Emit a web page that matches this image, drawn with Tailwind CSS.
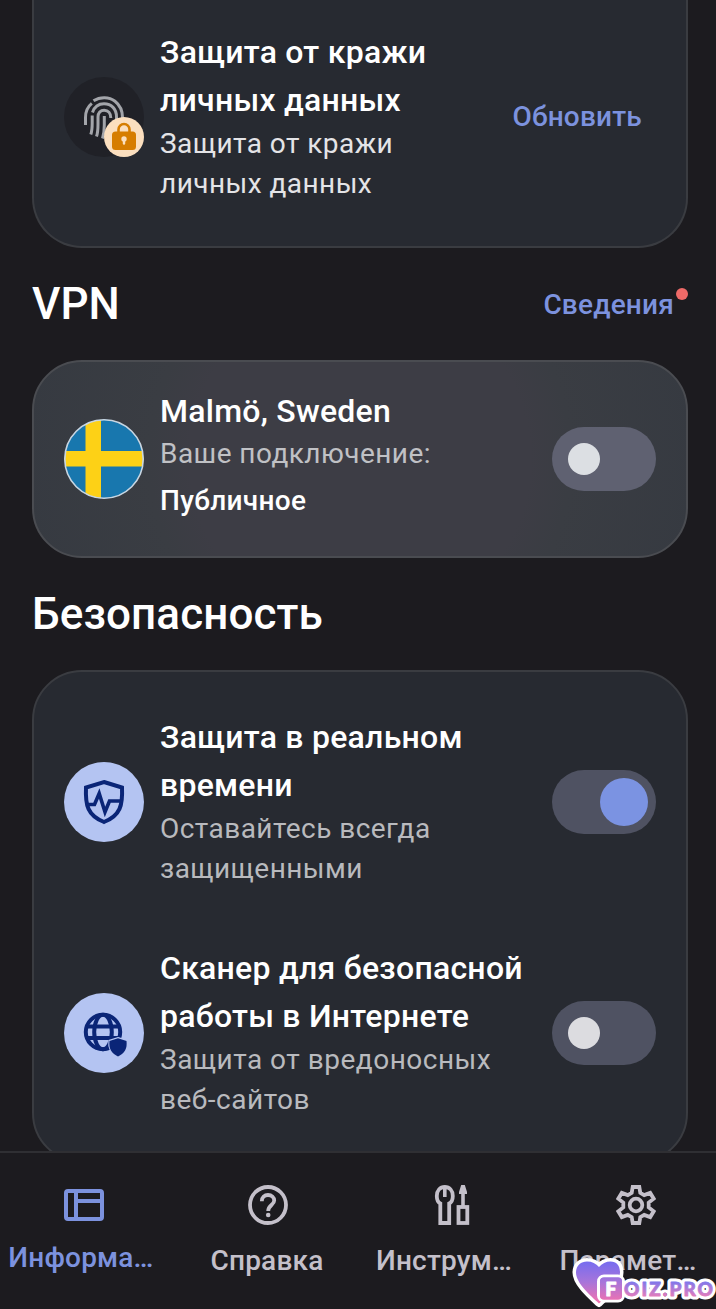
<!DOCTYPE html>
<html lang="ru">

<head>
    <meta charset="UTF-8">
    <meta name="viewport" content="width=device-width, initial-scale=1.0">
    <title>Безопасность</title>
    <script src="https://cdn.jsdelivr.net/npm/@tailwindcss/browser@4"></script>
</head>

<body class="bg-[#1c1b1f] text-white font-[Roboto,sans-serif] antialiased">
    <div class="relative flex flex-col h-[1309px] overflow-hidden">
        <main class="flex-1 min-h-0 overflow-hidden pl-8 pr-7">
            <!-- Identity protection -->
            <section class="h-[248px] px-[30px] pt-7 border-2 border-t-0 border-[#3a3c41] bg-[#272a31] rounded-b-[50px]">
                <div class="flex items-center gap-4">
                    <div class="relative mt-0.5 size-20 shrink-0 rounded-full bg-[#202127] flex items-center justify-center">
                        <svg class="size-11" viewBox="0 0 44 44" fill="none" stroke="#a3a5aa" stroke-width="3" stroke-linecap="butt">
                            <path d="M3.500 30V22.500C3.500 16.500 6 11.500 9.800 8.400" />
                            <path d="M11.500 5.800C18 1.600 27 1.600 33 6.200C38.500 10.500 40.500 16 40.500 22.500V27" />
                            <path d="M10.500 17.500C12.500 11.500 17 8.800 22 8.800C29.500 8.800 34.500 14 34.500 22V26" />
                            <path d="M8.800 39.500C10 36 10.200 33 10.200 28V20.500" />
                            <path d="M14.500 41.500C15.800 38 16 34 16 29V22C16 18 18.500 15.200 22.200 15.200C26 15.200 28.800 18 28.800 23" />
                            <path d="M20.500 43.500C22 39 22.300 35 22.300 30V21" />
                        </svg>
                        <div class="absolute right-0 bottom-0 size-10 rounded-full bg-[#fbdfbf] flex items-center justify-center">
                            <svg class="size-10" viewBox="0 0 40 40">
                                <path d="M14.500 16V12.500a5.500 5.500 0 0 1 11 0V16" fill="none" stroke="#d67d00" stroke-width="2.600" />
                                <rect x="8" y="14.500" width="24" height="18.500" rx="3.500" fill="#d67d00" />
                                <circle cx="20" cy="22" r="2.700" fill="#fbdfbf" />
                                <rect x="18.800" y="22" width="2.400" height="5.800" rx="1.200" fill="#fbdfbf" />
                            </svg>
                        </div>
                    </div>
                    <div class="flex-1">
                        <h2 class="text-[32px] leading-[48px] font-medium tracking-[0.25px]">Защита от кражи<br>личных данных</h2>
                        <p class="text-[28px] leading-10 tracking-[0.45px] text-[#e4e4e7]">Защита от кражи<br>личных данных</p>
                    </div>
                    <button class="mt-0.5 mr-[14px] text-[28px] font-medium tracking-[0.2px] text-[#7c92de]">Обновить</button>
                </div>
            </section>

            <!-- VPN -->
            <div class="h-28 flex items-center justify-between">
                <h1 class="text-[44px] leading-[56px] font-medium">VPN</h1>
                <a class="relative mt-0.5 pr-[14px] text-[28px] font-medium tracking-[0.2px] text-[#7c92de]">Сведения<span
                        class="absolute right-0 top-1 size-3 rounded-full bg-[#ee6a68]"></span></a>
            </div>
            <section
                class="h-[198px] px-[30px] flex items-center gap-4 border-2 border-[#4a4c51] rounded-[50px] bg-[radial-gradient(circle_at_50%_50%,#3d3d45_0%,#3d3d45_50%,#3a3d43_62%,#363a41_100%)]">
                <svg class="size-20 shrink-0" viewBox="0 0 80 80">
                    <clipPath id="flag">
                        <circle cx="40" cy="40" r="39.500" />
                    </clipPath>
                    <g clip-path="url(#flag)">
                        <rect width="80" height="80" fill="#1877ae" />
                        <path d="M21.500 0h15.500v80h-15.500zM0 32h80v15.500H0z" fill="#fdd116" />
                    </g>
                    <circle cx="40" cy="40" r="39.200" fill="none" stroke="#c9d6e2" stroke-width="1.600" />
                </svg>
                <div class="flex-1">
                    <h2 class="text-[32px] leading-[48px] font-medium tracking-[0.25px]">Malmö, Sweden</h2>
                    <p class="text-[28px] leading-[38px] tracking-[0.45px] text-[#c0c1c5]">Ваше подключение:</p>
                    <p class="pb-0.5 text-[28px] leading-[56px] font-medium tracking-[0.3px]">Публичное</p>
                </div>
                <div class="w-[104px] h-16 px-4 rounded-full bg-[#5f6171] flex items-center">
                    <span class="size-8 rounded-full bg-[#dcdfe3]"></span>
                </div>
            </section>

            <!-- Security -->
            <div class="h-28 flex items-center">
                <h1 class="text-[44px] leading-[56px] font-medium tracking-[0.1px]">Безопасность</h1>
            </div>
            <section class="px-[30px] py-[41px] flex flex-col gap-[55px] border-2 border-[#3a3c41] bg-[#272a31] rounded-[50px]">
                <div class="flex items-center gap-4">
                    <div class="mt-0.5 size-20 shrink-0 rounded-full bg-[#b4c4f2] flex items-center justify-center">
                        <svg class="size-20" viewBox="0 0 80 80" fill="none" stroke="#0a2577" stroke-width="4">
                            <path d="M40 20L58 25.500C58.800 43 56.500 53.500 40 60C23.500 53.500 21.200 43 22 25.500Z" />
                            <path d="M23 42.500H30.500L35.200 31.500L41 50L45.500 39H58" stroke-width="3.600" />
                        </svg>
                    </div>
                    <div class="flex-1">
                        <h2 class="text-[32px] leading-[48px] font-medium tracking-[0.25px]">Защита в реальном<br>времени</h2>
                        <p class="text-[28px] leading-10 tracking-[0.45px] text-[#b9babe]">Оставайтесь всегда<br>защищенными</p>
                    </div>
                    <div class="mt-0.5 w-[104px] h-16 px-2 rounded-full bg-[#4f5262] flex items-center justify-end">
                        <span class="size-12 rounded-full bg-[#7b93e2]"></span>
                    </div>
                </div>
                <div class="flex items-center gap-4">
                    <div class="mt-0.5 size-20 shrink-0 rounded-full bg-[#b4c4f2] flex items-center justify-center">
                        <svg class="size-20" viewBox="0 0 80 80" fill="none" stroke="#0a2577" stroke-width="4">
                            <circle cx="39" cy="39" r="17.200" />
                            <ellipse cx="39" cy="39" rx="8.800" ry="17.200" />
                            <path d="M23.500 33.500H54.500M23.500 45H54.500" />
                            <path d="M54 45.200L62.500 48C63.500 56 60 60.500 54 63.500C48 60.500 44.500 56 45.500 48Z" fill="#0a2577" stroke="#b4c4f2" stroke-width="2.400" paint-order="stroke" />
                        </svg>
                    </div>
                    <div class="flex-1">
                        <h2 class="text-[32px] leading-[48px] font-medium tracking-[0.25px] whitespace-nowrap">Сканер для безопасной<br>работы в Интернете</h2>
                        <p class="text-[28px] leading-10 tracking-[0.5px] text-[#b9babe]">Защита от вредоносных<br>веб-сайтов</p>
                    </div>
                    <div class="mt-0.5 w-[104px] h-16 px-4 rounded-full bg-[#4f5262] flex items-center">
                        <span class="size-8 rounded-full bg-[#dcdce0]"></span>
                    </div>
                </div>
            </section>
        </main>

        <!-- Bottom navigation -->
        <nav class="h-[158px] w-[720px] shrink-0 pt-8 grid grid-cols-4 gap-x-4 border-t-2 border-[#2f2f33] bg-[#1c1b1f] text-[28px] leading-10 font-medium tracking-[0.2px] text-[#c4c0ca]">
            <a class="flex flex-col items-center gap-[13px] text-[#7c92de]">
                <svg class="size-10" viewBox="0 0 40 40" fill="none" stroke="currentColor" stroke-width="4">
                    <rect x="2" y="6" width="36" height="28" rx="2" />
                    <path d="M12 6V34M12 16H38" />
                </svg>
                <span class="-ml-1.5">Информа…</span>
            </a>
            <a class="flex flex-col items-center gap-4">
                <svg class="size-10" viewBox="0 0 40 40" fill="none" stroke="currentColor" stroke-width="3.800">
                    <circle cx="20" cy="20" r="18" />
                    <path d="M13.800 16.200C13.800 12.300 16.500 10 20 10C23.700 10 26.200 12.400 26.200 15.500C26.200 20 20.200 20.200 20.200 26" />
                    <circle cx="20.200" cy="30" r="2.300" fill="currentColor" stroke="none" />
                </svg>
                <span class="-ml-0.5">Справка</span>
            </a>
            <a class="flex flex-col items-center gap-4">
                <svg class="size-10" viewBox="0 0 40 40" fill="none" stroke="currentColor" stroke-width="3.800">
                    <path d="M8.300 38V18.500C5.500 17 4.800 14 4.800 11C4.800 5.500 8 2 12.800 2C17.600 2 20.800 5.500 20.800 11C20.800 14 20 17 17.200 18.500V38Z" />
                    <path d="M12.800 2V12" stroke-width="3.600" />
                    <rect x="26.500" y="22" width="8.800" height="16" />
                    <path d="M31 22V6" stroke-width="3.600" />
                    <path d="M29.200 0H32.800L35 7V9H27V7Z" fill="currentColor" stroke="none" />
                </svg>
                <span class="-ml-4">Инструм…</span>
            </a>
            <a class="flex flex-col items-center gap-4">
                <svg class="size-10" viewBox="0 0 40 40" fill="none" stroke="currentColor" stroke-width="3.800">
                    <path d="M16.700 2H23.300L24.300 7.800L28.200 10.100L34.200 7.900L37.700 13.700L32.700 17.600V22.400L37.700 26.300L34.200 32.100L28.200 29.900L24.300 32.200L23.300 38H16.700L15.700 32.200L11.800 29.900L5.800 32.100L2.300 26.300L7.300 22.400V17.600L2.300 13.700L5.800 7.900L11.800 10.100L15.700 7.800Z" />
                    <circle cx="20" cy="20" r="6.300" />
                </svg>
                <span class="-ml-4">Парамет…</span>
            </a>
        </nav>

        <!-- Site badge over the corner -->
        <svg class="absolute right-0 bottom-0 w-[146px] h-[54px]" viewBox="0 0 146 54">
            <defs>
                <linearGradient id="badge" gradientUnits="userSpaceOnUse" x1="0" y1="6" x2="0" y2="48">
                    <stop offset="0" stop-color="#756cf0" />
                    <stop offset="0.5" stop-color="#a775da" />
                    <stop offset="1" stop-color="#f472ae" />
                </linearGradient>
                <linearGradient id="letters" gradientUnits="userSpaceOnUse" x1="0" y1="27" x2="0" y2="43">
                    <stop offset="0" stop-color="#8177ea" />
                    <stop offset="1" stop-color="#ed7db8" />
                </linearGradient>
            </defs>
            <path d="M29 48.500C20 40 6 28 6 17.500C6 10.500 11 6.500 17 6.500C22 6.500 26 8.500 29 12C32 8.500 36 6.500 40.500 6.500C46.500 6.500 50 10.500 50 17.500C50 29 38 40 29 48.500Z" fill="url(#badge)" stroke="#fff" stroke-width="7" stroke-linejoin="round" paint-order="stroke" />
            <rect x="30" y="22.500" width="22" height="22" rx="4" fill="url(#badge)" stroke="#fff" stroke-width="6" paint-order="stroke" />
            <g font-family="Lato, sans-serif" font-weight="900" font-size="19" stroke-linejoin="round">
                <text x="54" y="41" textLength="89" lengthAdjust="spacing" stroke="#fff" stroke-width="7">OIZ.PRO</text>
                <text x="54" y="41" textLength="89" lengthAdjust="spacing" fill="url(#letters)" stroke="url(#letters)" stroke-width="0.800">OIZ.PRO</text>
                <rect x="30" y="22.500" width="22" height="22" rx="4" fill="url(#badge)" />
                <text x="35.500" y="40.500" fill="#fff" stroke="#fff" stroke-width="1.200">F</text>
            </g>
        </svg>
    </div>
</body>

</html>
